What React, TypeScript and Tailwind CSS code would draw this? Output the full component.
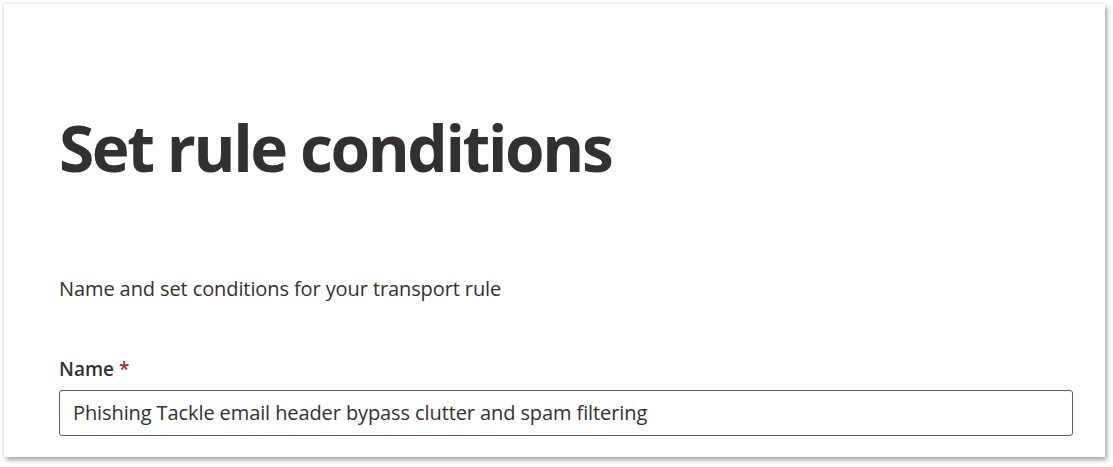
export default function App() {
  return (
    <div className="min-h-screen bg-white pl-[4px] pt-[4px] font-['Open_Sans',sans-serif] text-[#323130]">
      <div className="w-[1101px] h-[453px] bg-white shadow-[2px_3px_5px_rgba(0,0,0,0.35),-1px_-1px_3px_rgba(0,0,0,0.08)] pl-[55px] pr-[32px] pt-[112px]">
        <h1 className="text-[64px] leading-none font-bold tracking-[-2.4px]">Set rule conditions</h1>
        <p className="mt-[96px] text-[20px] leading-[26px] tracking-[-0.1px]">Name and set conditions for your transport rule</p>
        <div className="mt-[54px] text-[19px] leading-[26px] font-semibold">
          Name <span className="text-[#a4262c]">*</span>
        </div>
        <div className="mt-[8px] h-[46px] border border-[#605e5c] rounded-[3px] px-[13px] flex items-center text-[20px] tracking-[-0.1px]">
          Phishing Tackle email header bypass clutter and spam filtering
        </div>
      </div>
    </div>
  );
}
